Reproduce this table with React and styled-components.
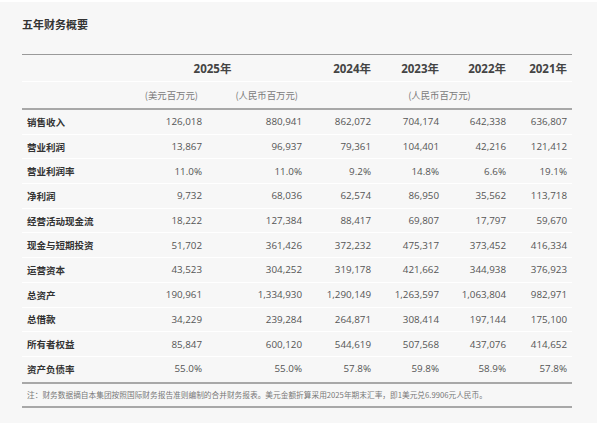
import React from "react";
import styled, { createGlobalStyle } from "styled-components";

const Global = createGlobalStyle`
  html, body { margin: 0; padding: 0; background: #ffffff; }
  body { font-family: "Open Sans", "Noto Sans CJK SC", sans-serif; }
`;

const COLS = "96px 89px 100px 69px 68px 67px 61px";

const Card = styled.section`
  margin-top: 2px;
  width: 597px;
  height: 421px;
  box-sizing: border-box;
  background: #f7f7f7;
  padding: 14px 25px 0 22px;
`;

const Title = styled.h2`
  margin: 0 0 22px 0;
  font-family: "Noto Sans CJK SC", sans-serif;
  font-size: 11px;
  line-height: 16px;
  font-weight: 700;
  color: #333;
`;

const Table = styled.div`
  border-top: 1px solid #9a9a9a;
  border-bottom: 2px solid #a8a8a8;
`;

const Head = styled.div`
  border-bottom: 2px solid #a8a8a8;
`;

const YearRow = styled.div`
  display: grid;
  grid-template-columns: ${COLS};
  height: 27px;
  box-sizing: border-box;
  border-bottom: 1px solid #ffffff;
  align-items: center;
`;

const Year = styled.div`
  grid-column: ${(p) => p.$span || "auto"};
  text-align: ${(p) => (p.$center ? "center" : "right")};
  padding-right: ${(p) => (p.$center ? "0" : "5px")};
  font-family: "Open Sans", "Noto Sans CJK SC", sans-serif;
  font-size: 11.5px;
  font-weight: 700;
  color: #444;
`;

const UnitRow = styled.div`
  display: grid;
  grid-template-columns: ${COLS};
  height: 26px;
  align-items: center;
`;

const Unit = styled.div`
  grid-column: ${(p) => p.$span || "auto"};
  text-align: ${(p) => (p.$center ? "center" : "right")};
  padding-right: ${(p) => (p.$center ? "0" : "9px")};
  font-family: "Noto Sans CJK SC", sans-serif;
  font-size: 9.4px;
  color: #7a7a7a;
`;

const Row = styled.div`
  display: grid;
  grid-template-columns: ${COLS};
  height: 24.7px;
  box-sizing: border-box;
  align-items: center;
  border-bottom: 1px solid ${(p) => (p.$last ? "transparent" : "#ffffff")};
`;

const Label = styled.div`
  padding-left: 5px;
  font-family: "Noto Sans CJK SC", sans-serif;
  font-size: 9.5px;
  font-weight: 700;
  color: #333;
  white-space: nowrap;
`;

const Num = styled.div`
  text-align: right;
  padding-right: 5px;
  font-family: "Open Sans", sans-serif;
  font-size: 9.8px;
  color: #555;
`;

const Note = styled.div`
  height: 22px;
  display: flex;
  align-items: center;
  padding-left: 5px;
  border-bottom: 2px solid #a8a8a8;
  font-family: "Noto Sans CJK SC", sans-serif;
  font-size: 7.7px;
  color: #777;
  white-space: nowrap;
`;

const rows = [
  ["销售收入", "126,018", "880,941", "862,072", "704,174", "642,338", "636,807"],
  ["营业利润", "13,867", "96,937", "79,361", "104,401", "42,216", "121,412"],
  ["营业利润率", "11.0%", "11.0%", "9.2%", "14.8%", "6.6%", "19.1%"],
  ["净利润", "9,732", "68,036", "62,574", "86,950", "35,562", "113,718"],
  ["经营活动现金流", "18,222", "127,384", "88,417", "69,807", "17,797", "59,670"],
  ["现金与短期投资", "51,702", "361,426", "372,232", "475,317", "373,452", "416,334"],
  ["运营资本", "43,523", "304,252", "319,178", "421,662", "344,938", "376,923"],
  ["总资产", "190,961", "1,334,930", "1,290,149", "1,263,597", "1,063,804", "982,971"],
  ["总借款", "34,229", "239,284", "264,871", "308,414", "197,144", "175,100"],
  ["所有者权益", "85,847", "600,120", "544,619", "507,568", "437,076", "414,652"],
  ["资产负债率", "55.0%", "55.0%", "57.8%", "59.8%", "58.9%", "57.8%"],
];

export default function App() {
  return (
    <>
      <Global />
      <Card>
        <Title>五年财务概要</Title>
        <Table>
          <Head>
            <YearRow>
              <div />
              <Year $span="2 / 4" $center>2025年</Year>
              <Year>2024年</Year>
              <Year>2023年</Year>
              <Year>2022年</Year>
              <Year>2021年</Year>
            </YearRow>
            <UnitRow>
              <div />
              <Unit>(美元百万元)</Unit>
              <Unit>(人民币百万元)</Unit>
              <Unit $span="4 / 8" $center>(人民币百万元)</Unit>
            </UnitRow>
          </Head>
          {rows.map((r, i) => (
            <Row key={r[0]} $last={i === rows.length - 1}>
              <Label>{r[0]}</Label>
              {r.slice(1).map((v, j) => (
                <Num key={j}>{v}</Num>
              ))}
            </Row>
          ))}
        </Table>
        <Note>
          注：财务数据摘自本集团按照国际财务报告准则编制的合并财务报表。美元金额折算采用2025年期末汇率，即1美元兑6.9906元人民币。
        </Note>
      </Card>
    </>
  );
}
